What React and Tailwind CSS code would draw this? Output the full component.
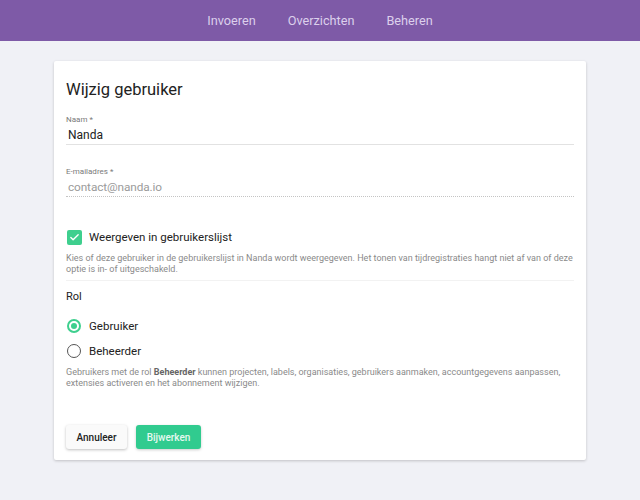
import { Check } from 'lucide-react'

const navItems = ['Invoeren', 'Overzichten', 'Beheren']

function Header() {
  return (
    <header className="flex h-[41px] items-center justify-center gap-[32px] bg-[#7e5aa7]">
      {navItems.map((item) => (
        <a key={item} href="#" className="text-[12.7px] leading-[16px] text-[#dcd0ec]">
          {item}
        </a>
      ))}
    </header>
  )
}

function Field({ label, value, muted }) {
  return (
    <div className="flex flex-col">
      <label className="text-[8px] leading-[10px] text-[#7a7a7a]">{label} *</label>
      <div
        className={
          muted
            ? 'mt-[3px] border-b border-dotted border-[#c4c4c4] pb-[2px] pl-[2px] text-[11.8px] leading-[14px] tracking-[-0.1px] text-[#9b9b9b]'
            : 'mt-[3px] border-b border-[#e2e2e2] pb-[2px] pl-[2px] text-[12px] leading-[14px] text-[#222]'
        }
      >
        {value}
      </div>
    </div>
  )
}

function Radio({ label, checked }) {
  return (
    <div className="flex h-[16px] items-center gap-[8px] pl-[1px]">
      <span
        className={
          checked
            ? 'flex h-[14px] w-[14px] items-center justify-center rounded-full border-2 border-[#3ecf8e]'
            : 'flex h-[14px] w-[14px] items-center justify-center rounded-full border-[1.5px] border-[#555]'
        }
      >
        {checked && <span className="h-[6px] w-[6px] rounded-full bg-[#3ecf8e]" />}
      </span>
      <span className="text-[11.5px] leading-[16px] text-[#222]">{label}</span>
    </div>
  )
}

export default function App() {
  return (
    <div className="min-h-[500px] bg-[#f0f1f6] font-['Roboto',sans-serif]">
      <Header />
      <div className="px-[54px] pt-[20px]">
        <div className="flex flex-col rounded-[2px] bg-white px-[12px] pb-[11px] pt-[18px] shadow-[0_1px_3px_rgba(0,0,0,0.2)]">
          <h1 className="text-[16.5px] leading-[22px] text-[#222]">Wijzig gebruiker</h1>
          <div className="mt-[14px]">
            <Field label="Naam" value="Nanda" />
          </div>
          <div className="mt-[22px]">
            <Field label="E-mailadres" value="contact@nanda.io" muted />
          </div>
          <div className="mt-[33px] flex h-[15px] items-center gap-[7px] pl-[1px]">
            <span className="flex h-[15px] w-[15px] items-center justify-center rounded-[2px] bg-[#3ecf8e]">
              <Check className="h-[11px] w-[11px] text-white" strokeWidth={3} />
            </span>
            <span className="text-[11.5px] leading-[15px] text-[#222]">Weergeven in gebruikerslijst</span>
          </div>
          <p className="mt-[8px] border-b border-[#f2f2f2] pb-[5px] text-[9px] leading-[11px] text-[#8a8a8a]">
            Kies of deze gebruiker in de gebruikerslijst in Nanda wordt weergegeven. Het tonen van tijdregistraties hangt niet af van of deze optie is in- of uitgeschakeld.
          </p>
          <div className="mt-[9px] text-[11px] leading-[14px] text-[#222]">Rol</div>
          <div className="mt-[14px] flex flex-col gap-[9px]">
            <Radio label="Gebruiker" checked />
            <Radio label="Beheerder" />
          </div>
          <p className="mt-[8px] text-[9px] leading-[11px] text-[#8a8a8a]">
            Gebruikers met de rol <b className="font-bold text-[#666]">Beheerder</b> kunnen projecten, labels, organisaties, gebruikers aanmaken, accountgegevens aanpassen, extensies activeren en het abonnement wijzigen.
          </p>
          <div className="mt-[36px] flex gap-[9px]">
            <button className="h-[24px] w-[61px] rounded-[3px] bg-[#fafafa] text-[10px] font-medium text-[#222] shadow-[0_1px_3px_rgba(0,0,0,0.25)]">
              Annuleer
            </button>
            <button className="h-[24px] w-[65px] rounded-[3px] bg-[#31cb8f] text-[10px] font-medium text-[#e6f9ef] shadow-[0_1px_3px_rgba(0,0,0,0.2)]">
              Bijwerken
            </button>
          </div>
        </div>
      </div>
    </div>
  )
}
